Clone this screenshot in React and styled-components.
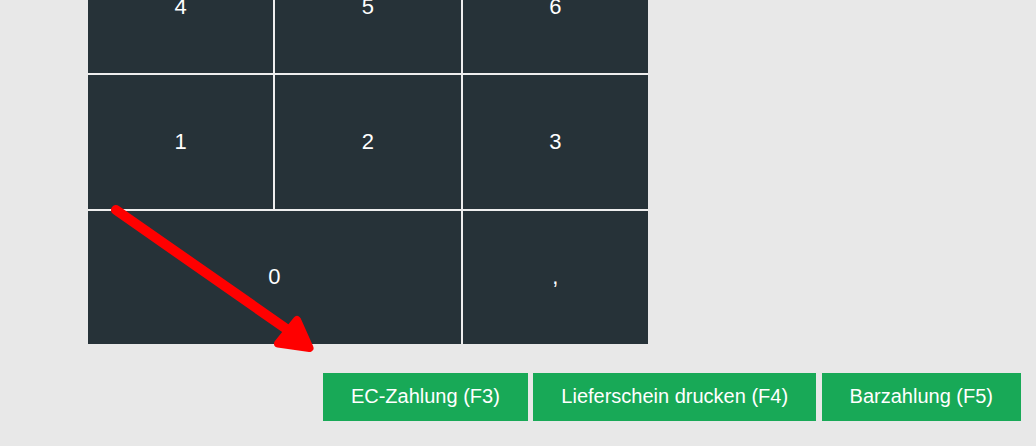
import React from "react";
import styled, { createGlobalStyle } from "styled-components";

const Global = createGlobalStyle`
  html, body {
    margin: 0;
    padding: 0;
    background: #e8e8e8;
    font-family: "Liberation Sans", Arial, sans-serif;
    overflow: hidden;
  }
`;

const Page = styled.div`
  position: relative;
  width: 1036px;
  height: 446px;
  overflow: hidden;
  background: #e8e8e8;
`;

const PadArea = styled.div`
  padding-left: 88px;
  margin-top: -60px;
`;

const Keypad = styled.div`
  width: 560px;
  display: grid;
  grid-template-columns: repeat(3, 1fr);
  grid-template-rows: repeat(3, 133.33px);
  gap: 2px;
  background: #eeeeee;
`;

const Key = styled.button`
  grid-column: span ${(p) => p.$span || 1};
  border: none;
  margin: 0;
  padding: 0;
  background: #263238;
  color: #ffffff;
  font-family: "Liberation Sans", Arial, sans-serif;
  font-size: 22px;
  display: flex;
  align-items: center;
  justify-content: center;
  cursor: pointer;
`;

const Actions = styled.div`
  display: flex;
  justify-content: flex-end;
  gap: 5.5px;
  padding-right: 15px;
  margin-top: 28.7px;
`;

const ActionButton = styled.button`
  height: 48px;
  padding: 0 28px;
  border: none;
  background: #18a957;
  color: #ffffff;
  font-family: "Liberation Sans", Arial, sans-serif;
  font-size: 20px;
  white-space: nowrap;
  cursor: pointer;
`;

const Overlay = styled.svg`
  position: absolute;
  left: 0;
  top: 0;
  pointer-events: none;
`;

export default function App() {
  const keys = [
    { k: "4" }, { k: "5" }, { k: "6" },
    { k: "1" }, { k: "2" }, { k: "3" },
    { k: "0", span: 2 }, { k: "," },
  ];
  return (
    <Page>
      <Global />
      <PadArea>
        <Keypad>
          {keys.map((key) => (
            <Key key={key.k} $span={key.span}>{key.k}</Key>
          ))}
        </Keypad>
      </PadArea>
      <Actions>
        <ActionButton>EC-Zahlung (F3)</ActionButton>
        <ActionButton>Lieferschein drucken (F4)</ActionButton>
        <ActionButton>Barzahlung (F5)</ActionButton>
      </Actions>
      <Overlay width="1036" height="446" viewBox="0 0 1036 446">
        <line x1="116" y1="210" x2="298" y2="337" stroke="#ff0000" strokeWidth="10" strokeLinecap="round" />
        <polygon
          points="278,343.5 297,320 309.5,348"
          fill="#ff0000"
          stroke="#ff0000"
          strokeWidth="8"
          strokeLinejoin="round"
        />
      </Overlay>
    </Page>
  );
}
